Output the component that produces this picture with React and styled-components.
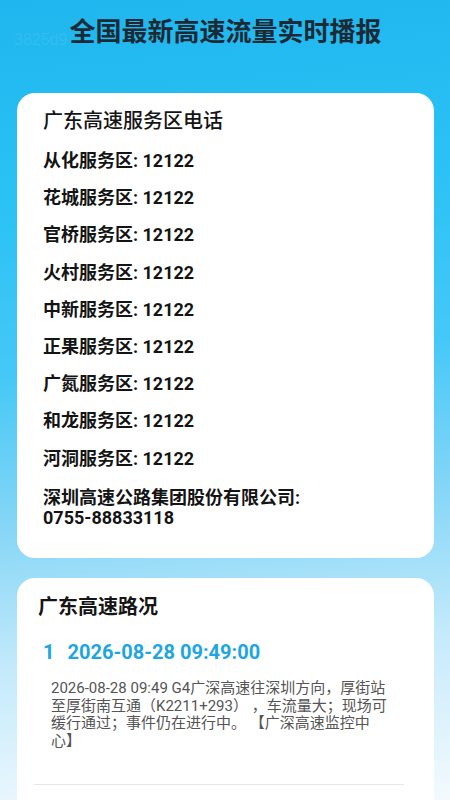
import React from 'react'
import styled, { createGlobalStyle } from 'styled-components'

const GlobalStyle = createGlobalStyle`
  html, body {
    margin: 0;
    padding: 0;
  }
  body {
    font-family: Roboto, "Noto Sans CJK SC", sans-serif;
  }
`

const Page = styled.div`
  position: relative;
  width: 450px;
  height: 800px;
  overflow: hidden;
  box-sizing: border-box;
  padding: 0 16px 0 17px;
  background: linear-gradient(
    175deg,
    #1fb6ef 0%,
    #2bc2f5 25%,
    #45c8f7 45%,
    #86d6f7 63%,
    #c4eafb 80%,
    #f3fafe 100%
  );
`

const Watermark = styled.span`
  position: absolute;
  left: 14px;
  top: 31px;
  font-family: "Liberation Sans", sans-serif;
  font-size: 16px;
  color: rgba(255, 255, 255, 0.09);
`

const Header = styled.h1`
  margin: 0;
  height: 93px;
  display: flex;
  align-items: flex-start;
  justify-content: center;
  padding-top: 11px;
  box-sizing: border-box;
  font-family: "Noto Sans CJK SC", sans-serif;
  font-size: 26px;
  font-weight: 700;
  color: #1b2a35;
`

const Card = styled.section`
  background: #fff;
  border-radius: 18px;
  padding: ${p => p.$pad};
  margin-bottom: ${p => p.$gap || 0}px;
  box-sizing: border-box;
  height: ${p => p.$h}px;
`

const CardTitle = styled.h2`
  margin: 0;
  font-size: 20px;
  font-weight: ${p => p.$weight || 700};
  color: #151515;
  line-height: 28px;
`

const PhoneList = styled.ul`
  list-style: none;
  margin: 13px 0 0;
  padding: 0;
  display: flex;
  flex-direction: column;
  gap: 11.2px;
`

const PhoneItem = styled.li`
  font-size: 18px;
  font-weight: 700;
  color: #141414;
  line-height: 26px;
`

const Company = styled.p`
  margin: 16px 0 0;
  font-size: 18px;
  font-weight: 700;
  color: #141414;
  line-height: 20px;
  width: 290px;
`

const EventHead = styled.div`
  display: flex;
  gap: 13px;
  margin: 18px 0 0 5px;
  font-size: 20px;
  font-weight: 700;
  color: #1ea5e2;
  line-height: 26px;
`

const EventText = styled.p`
  margin: 15px 0 0 13px;
  width: 338px;
  font-size: 15px;
  color: #555;
  line-height: 17.5px;
`

const Divider = styled.hr`
  border: none;
  border-top: 1px solid #e6e6e6;
  margin: 34px 0 0 -4px;
  width: 370px;
`

const areas = ['从化', '花城', '官桥', '火村', '中新', '正果', '广氮', '和龙', '河洞']

export default function App() {
  return (
    <>
      <GlobalStyle />
      <Page>
        <Watermark>3825d9</Watermark>
        <Header>全国最新高速流量实时播报</Header>
        <Card $pad="14px 26px" $gap={20} $h={465}>
          <CardTitle $weight={500}>广东高速服务区电话</CardTitle>
          <PhoneList>
            {areas.map(a => (
              <PhoneItem key={a}>{a}服务区: 12122</PhoneItem>
            ))}
          </PhoneList>
          <Company>
            深圳高速公路集团股份有限公司:
            <br />
            0755-88833118
          </Company>
        </Card>
        <Card $pad="15px 21px" $h={260}>
          <CardTitle>广东高速路况</CardTitle>
          <EventHead>
            <span>1</span>
            <span>2026-08-28 09:49:00</span>
          </EventHead>
          <EventText>
            2026-08-28 09:49 G4广深高速往深圳方向，厚街站至厚街南互通（K2211+293） ，车流量大；现场可缓行通过；事件仍在进行中。 【广深高速监控中心】
          </EventText>
          <Divider />
        </Card>
      </Page>
    </>
  )
}
